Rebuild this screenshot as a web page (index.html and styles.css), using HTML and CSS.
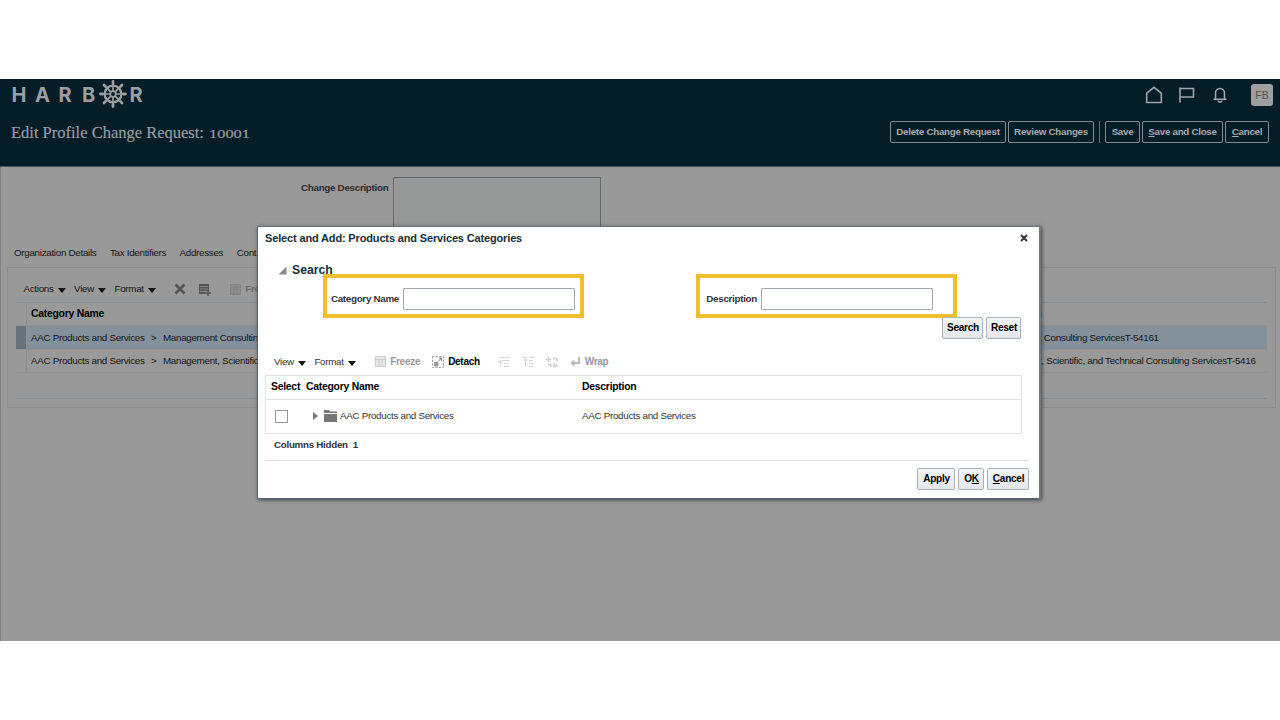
FILE: index.html
```html
<!DOCTYPE html>
<html lang="en">
  <head>
    <meta charset="utf-8" />
    <meta name="viewport" content="width=device-width, initial-scale=1.0" />
    <title>Edit Profile Change Request: 10001</title>
    <link rel="stylesheet" href="styles.css">
  </head>
  <body>
    <div class="app">
      <header class="header">
        <div class="brand-row">
          <div class="logo">
            <span>H</span><span>A</span><span>R</span><span>B</span>
            <svg class="wheel" viewBox="0 0 28 28" fill="none" stroke="currentColor">
              <circle cx="14" cy="14" r="8.4" stroke-width="2.4" />
              <circle cx="14" cy="14" r="2.8" stroke-width="1.7" />
              <path stroke-width="1.7" d="M14 1v10M14 17v10M1 14h10M17 14h10M4.800 4.800l7 7M16.200 16.200l7 7M23.200 4.800l-7 7M11.800 16.200l-7 7" />
              <path stroke-width="2.8" stroke-linecap="round" d="M14 1.500v2M14 24.500v2M1.500 14h2M24.500 14h2M5 5l1.200 1.200M23 5l-1.200 1.200M5 23l1.200-1.200M23 23l-1.200-1.200" />
            </svg>
            <span>R</span>
          </div>
          <nav class="global-icons">
            <svg width="18" height="18" viewBox="0 0 18 18"><path d="M1.700 7.200L9 1.300l7.300 5.900v9.300H1.700z" /></svg>
            <svg width="18" height="18" viewBox="0 0 18 18"><path d="M2 1.500v15M2 2.500h13.500v8.500H2" /></svg>
            <svg width="18" height="18" viewBox="0 0 18 18"><path d="M2.500 13.200h13M4.500 13V7a4.500 4.500 0 0 1 9 0v6M7 14.500c.3 2.200 3.700 2.200 4 0" /></svg>
            <span class="avatar">FB</span>
          </nav>
        </div>
        <div class="title-row">
          <h1>Edit Profile Change Request: <span class="number">10001</span></h1>
          <div class="actions">
            <button class="ghost w-delete">Delete Change Request</button>
            <button class="ghost w-review">Review Changes</button>
            <i class="separator"></i>
            <button class="ghost w-save">Save</button>
            <button class="ghost w-close"><u>S</u>ave and Close</button>
            <button class="ghost w-cancel"><u>C</u>ancel</button>
          </div>
        </div>
      </header>

      <main class="content">
        <div class="change">
          <label for="change">Change Description</label>
          <textarea id="change"></textarea>
        </div>
        <nav class="tabs">
          <a>Organization Details</a>
          <a>Tax Identifiers</a>
          <a>Addresses</a>
          <a>Cont</a>
        </nav>
        <section class="panel">
          <div class="toolbar">
            <span class="menu">Actions</span>
            <span class="menu">View</span>
            <span class="menu">Format</span>
            <svg class="delete-icon" width="12" height="12" viewBox="0 0 12 12"><path d="M1.500 1.500l9 9M10.500 1.500l-9 9" stroke="#555" stroke-width="2.600" /></svg>
            <svg class="add-icon" width="13" height="13" viewBox="0 0 13 13"><path d="M1 1h10v7H7v3H1z" fill="#555" /><path d="M2 3.500h8M2 6h8M2 8.500h5" stroke="#888" /><path d="M10 7v6M7 10h6" stroke="#555" stroke-width="1.500" /></svg>
            <svg class="freeze-icon" width="11" height="11" viewBox="0 0 11 11"><path d="M.5.500h10v10H.5zM.5 3.500h10M4 1v10M7 1v10" fill="#8d8d8d" stroke="#828282" /></svg>
            <span class="disabled">Fre</span>
          </div>
          <div class="grid">
            <div class="grid-row grid-head"><i></i><b>Category Name</b><b>Description</b></div>
            <div class="grid-row selected"><i></i><span>AAC Products and Services <em>&gt;</em> Management Consulting</span><span>Management Consulting ServicesT-54161</span></div>
            <div class="grid-row"><i></i><span>AAC Products and Services <em>&gt;</em> Management, Scientific</span><span>Management, Scientific, and Technical Consulting ServicesT-5416</span></div>
          </div>
        </section>
      </main>

      <div class="dialog" role="dialog">
        <div class="dialog-title">
          <h2>Select and Add: Products and Services Categories</h2>
          <svg width="8" height="8" viewBox="0 0 8 8"><path d="M1 1l6 6M7 1L1 7" stroke="#333" stroke-width="1.900" /></svg>
        </div>
        <h3>
          <svg width="9" height="9" viewBox="0 0 9 9"><path d="M8.500.5v8H.5z" fill="#8a8a8a" /></svg>
          Search
        </h3>
        <div class="fields">
          <div class="field"><label for="name">Category Name</label><input id="name" type="text" /></div>
          <div class="field"><label for="desc">Description</label><input id="desc" type="text" /></div>
        </div>
        <div class="search-buttons">
          <button class="btn w-search">Search</button>
          <button class="btn w-reset">Reset</button>
        </div>
        <div class="dialog-tools">
          <span class="menu">View</span>
          <span class="menu">Format</span>
          <span class="tool t-freeze"><svg width="11" height="11" viewBox="0 0 11 11"><path d="M.5.500h10v10H.5zM.5 3.500h10M4 4v7M7 4v7" fill="#e8e8e8" stroke="#ccc" /></svg>Freeze</span>
          <span class="tool t-detach"><svg width="12" height="12" viewBox="0 0 12 12"><path d="M.5.500h11v11H.5z" fill="none" stroke="#999" stroke-dasharray="2 1.500" /><path d="M2 6h4.500v4.500H2z" fill="#999" /><path d="M6 5.500L9.500 2M6.800 2h2.700v2.700" fill="none" stroke="#777" /></svg>Detach</span>
          <svg class="t-up" width="12" height="12" viewBox="0 0 12 12"><path d="M1 1.500h11M4 4.500h7M6 7.500h5M6 10.500h5M2.500 11V5M.5 6.500l2-2 2 2" fill="none" stroke="#d4d4d4" /></svg>
          <svg class="t-top" width="12" height="12" viewBox="0 0 12 12"><path d="M1 1.500h4M7 1.500h5M7 4.500h4M7 7.500h4M7 10.500h4M3.500 11V3M1.500 5l2-2 2 2" fill="none" stroke="#d4d4d4" /></svg>
          <svg class="t-tree" width="12" height="12" viewBox="0 0 12 12"><path d="M2.500 1v5M0 3.500h5M7 2.500h4v3M7 10.500h4M2 8.500h3v2.500M7 8.500h2M10 8l1 2.500" fill="none" stroke="#ccc" stroke-width="1.400" /></svg>
          <span class="tool t-wrap"><svg width="11" height="11" viewBox="0 0 11 11"><path d="M9 1v6H3" fill="none" stroke="#bbb" stroke-width="2" /><path d="M0 7l4.500-3.500v7z" fill="#bbb" /></svg>Wrap</span>
        </div>
        <div class="results">
          <div class="result-row result-head"><b>Select</b><b>Category Name</b><b>Description</b></div>
          <div class="result-row">
            <span><input type="checkbox" class="check" /></span>
            <span class="node">
              <svg width="5" height="8" viewBox="0 0 5 8"><path d="M0 0l5 4-5 4z" fill="#777" /></svg>
              <svg width="13" height="12" viewBox="0 0 13 12"><path d="M0 0h5l1 1.500h7V3H0zM0 4h13v8H0z" fill="#777" /></svg>
              AAC Products and Services
            </span>
            <span>AAC Products and Services</span>
          </div>
        </div>
        <p class="hidden-columns">Columns Hidden&nbsp; 1</p>
        <div class="dialog-footer">
          <button class="btn w-apply">Apply</button>
          <button class="btn w-ok">O<u>K</u></button>
          <button class="btn w-cancel2"><u>C</u>ancel</button>
        </div>
      </div>
    </div>
  </body>
</html>
```
FILE: styles.css
```css
* {
  box-sizing: border-box;
}
body {
  margin: 0;
  padding-top: 79px;
  background: #fff;
  font: 9.8px/12px "Liberation Sans", Arial, sans-serif;
  letter-spacing: -0.29px;
  overflow: hidden;
}
h1,
h2,
h3,
p {
  margin: 0;
}
button,
input,
textarea {
  font: inherit;
  letter-spacing: inherit;
  padding: 0;
  margin: 0;
}
b {
  font-size: 10.4px;
  letter-spacing: -0.25px;
}
svg {
  flex: none;
}
.app {
  position: relative;
  height: 562px;
  background: #999;
  color: #151515;
}

/* Header */
.header {
  height: 88px;
  background: #051d27;
  color: #999fa2;
  border-bottom: 1px solid #46565d;
}
.brand-row,
.title-row {
  display: flex;
  justify-content: space-between;
}
.brand-row {
  height: 42px;
  padding: 0 7px 0 11.5px;
}
.logo {
  display: flex;
  color: #9c9fa0;
  font: bold 20px/32px Inter, sans-serif;
  letter-spacing: 0;
}
.logo span {
  width: 23.5px;
}
.logo span:nth-child(4) {
  width: 17.5px;
}
.logo span:last-child {
  width: 15px;
}
.wheel {
  width: 28px;
  height: 28px;
  margin: 1px 3px 0 -1px;
}
.global-icons {
  display: flex;
  align-items: center;
  height: 32px;
  gap: 15px;
}
.global-icons svg {
  position: relative;
  left: 1px;
  fill: none;
  stroke: #a0a5a7;
  stroke-width: 1.6;
}
.avatar {
  width: 22px;
  height: 22px;
  margin-left: 8px;
  border-radius: 3px;
  background: #a09f9f;
  color: #555;
  font-size: 10.5px;
  letter-spacing: 0;
  line-height: 23px;
  text-align: center;
}
.title-row {
  padding: 0 11px;
}
h1 {
  font: 16.5px/24px "Liberation Serif", Georgia, serif;
  letter-spacing: 0;
  white-space: nowrap;
  -webkit-text-stroke: 0.15px;
}
/* digits drawn at x-height, widened */
.number {
  display: inline-block;
  margin-left: 1px;
  font-size: 13px;
  transform: scaleX(1.26);
  transform-origin: left;
}
.actions {
  display: flex;
  gap: 2px;
}
.ghost {
  height: 22px;
  border: 1px solid #7f8b90;
  border-radius: 2px;
  background: none;
  color: #a5a9ab;
  font-weight: bold;
  line-height: 18px;
  padding: 0 0 1px;
  white-space: nowrap;
}
.separator {
  width: 1px;
  height: 22px;
  margin: 0 3px;
  background: #5d6b71;
}
.w-delete { width: 116px; }
.w-review { width: 86px; }
.w-save { width: 35px; }
.w-close { width: 81px; }
.w-cancel { width: 44px; }

/* Page behind the dialog */
.content {
  height: 474px;
  padding: 10px 4px 0 6px;
  border-left: 1px solid #808080;
}
.change {
  display: flex;
  gap: 6px;
  height: 64px;
  padding-left: 294px;
  color: #2b2b2b;
  font-weight: bold;
}
.change label {
  width: 86px;
  padding-top: 5px;
  white-space: nowrap;
}
.change textarea {
  width: 208px;
  height: 60px;
  border: 1px solid #61696c;
  background: #979998;
  resize: none;
}
.tabs {
  display: flex;
  gap: 13.5px;
  height: 26px;
  padding: 6px 0 0 7px;
}
.panel {
  height: 141px;
  border: 1px solid #8a8e90;
  padding: 0 8px;
}
.toolbar {
  display: flex;
  align-items: center;
  height: 34px;
  padding: 8px 0 0 7.5px;
}
.menu {
  display: flex;
  align-items: center;
  gap: 4px;
  margin-right: 8.5px;
}
.menu::after {
  content: "";
  margin-top: 3px;
  border: 4px solid transparent;
  border-top: 5px solid #111;
  border-bottom: 0;
}
.delete-icon {
  margin-left: 10px;
}
.add-icon {
  margin-left: 12px;
}
.freeze-icon {
  margin: 0 4px 0 19px;
}
.disabled {
  color: #6b6b6b;
  font-weight: bold;
}
.grid {
  height: 97px;
  border-top: 1px solid #858b8f;
  border-bottom: 1px solid #858b8f;
}
.grid-row {
  display: grid;
  grid-template-columns: 11px 960px 1fr;
  height: 23px;
  line-height: 21px;
  white-space: nowrap;
  border-bottom: 1px solid #8f9294;
}
.grid-row > :nth-child(2) {
  padding-left: 4px;
}
.grid-row i {
  border-right: 1px solid #8a8e90;
}
.grid-row em {
  font-style: normal;
  margin: 0 4px;
}
.grid-head {
  color: #000;
}
.grid-row.selected {
  height: 24px;
  background: #84919b;
  line-height: 23px;
}
.selected i {
  background: #66737d;
}

/* Dialog */
.dialog {
  position: absolute;
  left: 257px;
  top: 147px;
  width: 784px;
  height: 273px;
  padding: 0 10px 0 7px;
  border: 1px solid #58656e;
  border-top-color: #6d757c;
  border-right: 2px solid #6b7880;
  background: #fff;
  box-shadow: 1px 1px 4px rgba(20, 30, 40, 0.7);
  color: #333;
}
.dialog-title {
  display: flex;
  align-items: center;
  justify-content: space-between;
  height: 21px;
  padding-right: 1px;
}
.dialog-title svg {
  margin-top: 1px;
}
h2 {
  font-size: 11px;
  letter-spacing: -0.15px;
  color: #152f3b;
}
h3 {
  display: flex;
  align-items: center;
  gap: 5px;
  height: 26px;
  padding: 18px 0 0 13px;
  font-size: 12.2px;
  letter-spacing: 0;
  color: #152f3b;
}
.fields {
  display: flex;
  gap: 112px;
  padding-left: 58px;
}
.field {
  display: flex;
  align-items: center;
  width: 261px;
  height: 44px;
  padding: 6px 5px 0 0;
  justify-content: flex-end;
  border: 4px solid #efbf2d;
}
.field + .field {
  padding-right: 20px;
}
.field label {
  margin-right: 4px;
  font-weight: bold;
  white-space: nowrap;
}
.field input {
  width: 172px;
  height: 22px;
  border: 1px solid #a3a8ae;
  border-radius: 1px;
}
.search-buttons {
  display: flex;
  justify-content: flex-end;
  gap: 3px;
  height: 32px;
  margin-top: -1px;
  padding-right: 8px;
}
.btn {
  height: 22px;
  border: 1px solid #a9b2b9;
  border-radius: 2px;
  background: linear-gradient(#f3f5f7, #e3e7ec);
  color: #000;
  font-weight: bold;
  font-size: 10.1px;
  line-height: 18px;
  padding-left: 1px;
}
.w-search { width: 41px; }
.w-reset { width: 35px; }
.w-apply { width: 38px; }
.w-ok { width: 26px; }
.w-cancel2 { width: 42px; }
.dialog-tools {
  display: flex;
  align-items: center;
  height: 26px;
  padding: 0 0 1px 9px;
}
.tool {
  display: flex;
  align-items: center;
  gap: 4px;
  color: #999;
  font-size: 10px;
  font-weight: bold;
}
.t-freeze {
  margin-left: 11px;
}
.t-detach {
  margin-left: 12px;
  color: #000;
}
.t-up {
  margin-left: 14px;
}
.t-top,
.t-tree,
.t-wrap {
  margin-left: 12px;
}
.results {
  width: 757px;
  border: 1px solid #e0e3e5;
}
.result-row {
  display: grid;
  grid-template-columns: 35px 276px 1fr;
  align-items: center;
  height: 33px;
  padding: 0 0 1px 5px;
}
.result-head {
  height: 24px;
  border-bottom: 1px solid #e0e3e5;
  color: #000;
}
.check {
  display: block;
  appearance: none;
  width: 13px;
  height: 13px;
  margin-left: 4px;
  border: 1px solid #999;
}
.node {
  display: flex;
  align-items: center;
  gap: 3px;
  padding: 0 0 1px 7px;
}
.node svg:first-child {
  margin-right: 3px;
}
.hidden-columns {
  height: 26px;
  padding: 5px 0 0 9px;
  font-weight: bold;
}
.dialog-footer {
  display: flex;
  justify-content: flex-end;
  gap: 3px;
  padding-top: 7px;
  border-top: 1px solid #dcdfe1;
}
.t-detach {
  margin-right: 4px;
}
```
